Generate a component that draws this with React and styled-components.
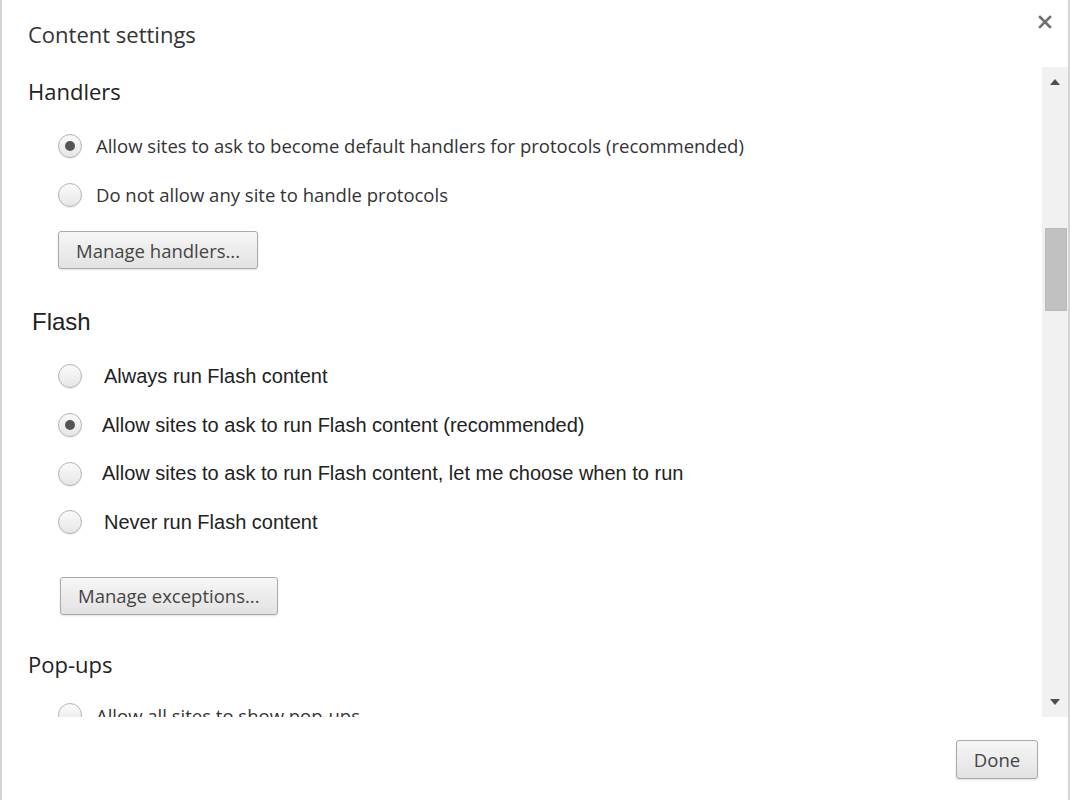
import styled, { createGlobalStyle } from "styled-components";

const GlobalStyle = createGlobalStyle`
  html, body {
    margin: 0;
    padding: 0;
    background: #ffffff;
  }
  * {
    box-sizing: border-box;
  }
`;

const handlers = [
  { label: "Allow sites to ask to become default handlers for protocols (recommended)", checked: true },
  { label: "Do not allow any site to handle protocols", checked: false },
];

const flash = [
  { label: "Always run Flash content", checked: false, shift: 2 },
  { label: "Allow sites to ask to run Flash content (recommended)", checked: true, shift: 0 },
  { label: "Allow sites to ask to run Flash content, let me choose when to run", checked: false, shift: 0 },
  { label: "Never run Flash content", checked: false, shift: 2 },
];

export default function App() {
  return (
    <>
      <GlobalStyle />
      <Dialog>
        <Header>
          <Title>Content settings</Title>
          <CloseBtn aria-label="Close">
            <svg width="14" height="14" viewBox="0 0 14 14">
              <path d="M2 2 L12 12 M12 2 L2 12" stroke="#6f6f6f" strokeWidth="2.6" strokeLinecap="square" />
            </svg>
          </CloseBtn>
        </Header>

        <Body>
          <ScrollArea>
            <Section $indent={28}>
              <Heading>Handlers</Heading>
              <Options $top={16}>
                {handlers.map((o) => (
                  <Option key={o.label}>
                    <Radio $checked={o.checked} />
                    <OptionText $gap={14}>{o.label}</OptionText>
                  </Option>
                ))}
              </Options>
              <Button $top={12}>Manage handlers...</Button>
            </Section>

            <Section $indent={32} $top={38}>
              <ArialHeading>Flash</ArialHeading>
              <Options $top={15} $radioShift={-4} $row={48.7}>
                {flash.map((o) => (
                  <Option key={o.label}>
                    <Radio $checked={o.checked} />
                    <ArialText $gap={20 + o.shift}>{o.label}</ArialText>
                  </Option>
                ))}
              </Options>
              <Button $top={30} $shift={-2}>Manage exceptions...</Button>
            </Section>

            <Section $indent={28} $top={35}>
              <Heading>Pop-ups</Heading>
              <Options $top={13}>
                <Option>
                  <Radio $checked={false} />
                  <OptionText $gap={14}>Allow all sites to show pop-ups</OptionText>
                </Option>
              </Options>
            </Section>
          </ScrollArea>

          <Scrollbar>
            <Arrow>
              <svg width="10" height="6" viewBox="0 0 10 6">
                <path d="M0 6 L5 0 L10 6 Z" fill="#505050" />
              </svg>
            </Arrow>
            <Track>
              <Thumb />
            </Track>
            <Arrow>
              <svg width="10" height="6" viewBox="0 0 10 6">
                <path d="M0 0 L10 0 L5 6 Z" fill="#505050" />
              </svg>
            </Arrow>
          </Scrollbar>
        </Body>

        <Footer>
          <Button $done>Done</Button>
        </Footer>
      </Dialog>
    </>
  );
}

const Dialog = styled.div`
  position: relative;
  width: 1070px;
  height: 800px;
  border-left: 2px solid #d4d4d4;
  border-right: 2px solid #d4d4d4;
  background: #ffffff;
  display: flex;
  flex-direction: column;
  font-family: "Open Sans", "Noto Sans", sans-serif;
  color: #333333;
`;

const Header = styled.div`
  height: 67px;
  padding: 18px 0 0 26px;
`;

const Title = styled.h1`
  margin: 0;
  font-size: 22px;
  line-height: 32px;
  font-weight: 400;
  color: #333333;
`;

const CloseBtn = styled.button`
  position: absolute;
  top: 14px;
  right: 15px;
  width: 16px;
  height: 16px;
  padding: 0;
  border: none;
  background: transparent;
  display: flex;
  align-items: center;
  justify-content: center;
`;

const Body = styled.div`
  height: 650px;
  display: flex;
`;

const ScrollArea = styled.div`
  flex: 1;
  overflow: hidden;
  padding-top: 10px;
`;

const Section = styled.section`
  padding-left: ${(p) => p.$indent - 2}px;
  margin-top: ${(p) => p.$top || 0}px;
`;

const Heading = styled.h2`
  margin: 0;
  font-size: 22px;
  line-height: 28px;
  font-weight: 400;
  color: #222222;
`;

const ArialHeading = styled(Heading)`
  font-family: "Liberation Sans", Arial, sans-serif;
  font-size: 24px;
  line-height: 30px;
`;

const Options = styled.div`
  margin-top: ${(p) => p.$top}px;
  margin-left: ${(p) => 30 + (p.$radioShift || 0)}px;
  display: flex;
  flex-direction: column;

  & > label {
    height: ${(p) => p.$row || 49}px;
  }
`;

const Option = styled.label`
  display: flex;
  align-items: center;
`;

const Radio = styled.span`
  flex: none;
  width: 24px;
  height: 24px;
  border-radius: 50%;
  border: 1px solid #b4b4b4;
  background: linear-gradient(#fafafa, #e6e6e6);
  box-shadow: 0 1px 1px rgba(0, 0, 0, 0.08);
  display: flex;
  align-items: center;
  justify-content: center;

  &::after {
    content: "";
    width: 10px;
    height: 10px;
    border-radius: 50%;
    background: #555555;
    display: ${(p) => (p.$checked ? "block" : "none")};
  }
`;

const OptionText = styled.span`
  margin-left: ${(p) => p.$gap}px;
  font-size: 18.5px;
  color: #333333;
  white-space: nowrap;
`;

const ArialText = styled(OptionText)`
  font-family: "Liberation Sans", Arial, sans-serif;
  font-size: 20px;
  color: #222222;
`;

const Button = styled.button`
  display: block;
  margin-top: ${(p) => p.$top || 0}px;
  margin-left: ${(p) => (p.$done ? 0 : 30 + (p.$shift || 0))}px;
  height: 38px;
  padding: 0 17px;
  border: 1px solid #a9a9a9;
  border-radius: 3px;
  background: linear-gradient(#f6f6f6, #e2e2e2);
  box-shadow: 0 1px 2px rgba(0, 0, 0, 0.12);
  font-family: "Open Sans", "Noto Sans", sans-serif;
  font-size: 18.5px;
  color: #444444;
`;

const Scrollbar = styled.div`
  width: 26px;
  background: #f1f1f1;
  display: flex;
  flex-direction: column;
`;

const Arrow = styled.div`
  height: 30px;
  display: flex;
  align-items: center;
  justify-content: center;
`;

const Track = styled.div`
  flex: 1;
  padding: 131px 1px 0 3px;
`;

const Thumb = styled.div`
  height: 83px;
  background: #c1c1c1;
  border: 1px solid #b9b9b9;
`;

const Footer = styled.div`
  flex: 1;
  display: flex;
  justify-content: flex-end;
  align-items: flex-start;
  padding: 23px 30px 0 0;

  & > button {
    width: 82px;
    height: 39px;
    padding: 0;
  }
`;
